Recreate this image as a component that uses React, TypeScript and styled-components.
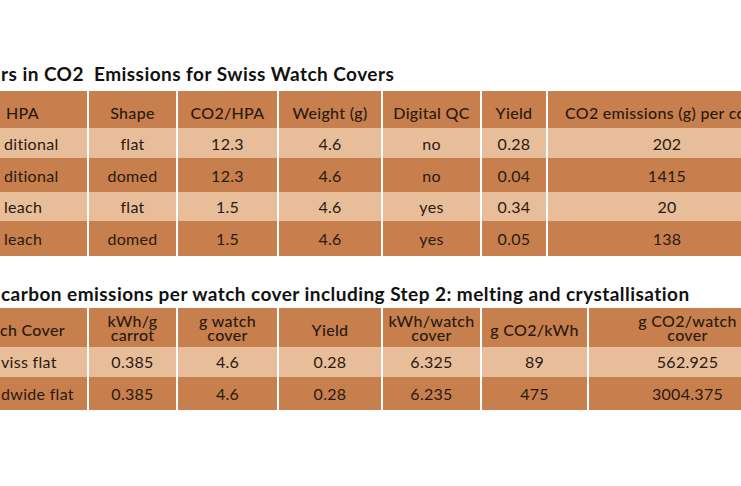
import React from 'react';
import styled, { createGlobalStyle } from 'styled-components';

const GlobalStyle = createGlobalStyle`
  html, body { margin: 0; padding: 0; background: #ffffff; }
  body {
    width: 741px;
    height: 486px;
    overflow: hidden;
    font-family: Lato, "Noto Sans", sans-serif;
    color: #2a1a10;
  }
`;

const DARK = '#c77f4e';
const LIGHT = '#e8bd9a';

const Page = styled.div`
  width: 741px;
  height: 486px;
  overflow: hidden;
  box-sizing: border-box;
  padding-top: 63px;
  display: flex;
  flex-direction: column;
  background: #ffffff;
`;

const Title = styled.h2<{ $gap: number; $top?: number }>`
  margin: ${(p) => p.$top ?? 0}px 0 ${(p) => p.$gap}px 0;
  padding-left: 1px;
  font-size: 19px;
  line-height: 22px;
  letter-spacing: 0.45px;
  font-weight: 700;
  color: #111111;
  white-space: pre;
  flex: none;
`;

const Table = styled.table`
  flex: none;
  width: 786px;
  table-layout: fixed;
  border-collapse: separate;
  border-spacing: 0;
`;

const Col = styled.col<{ $w: number }>`
  width: ${(p) => p.$w}px;
`;

const Row = styled.tr<{ $h: number; $light?: boolean }>`
  height: ${(p) => p.$h}px;
  background: ${(p) => (p.$light ? LIGHT : DARK)};
`;

const Cell = styled.td<{ $pt?: number; $left?: number }>`
  box-sizing: border-box;
  padding: ${(p) => p.$pt ?? 0}px 0 0 ${(p) => p.$left ?? 0}px;
  border-left: 2px solid #ffffff;
  text-align: center;
  vertical-align: middle;
  font-size: 16px;
  line-height: 18px;
  letter-spacing: 0.3px;
  font-weight: 400;
  white-space: nowrap;
  color: #2a1a10;

  &:first-child {
    border-left: none;
    text-align: left;
  }
`;

const Head = styled.th<{ $pt?: number; $left?: number }>`
  box-sizing: border-box;
  padding: ${(p) => p.$pt ?? 0}px 0 0 ${(p) => p.$left ?? 0}px;
  border-left: 2px solid #ffffff;
  text-align: center;
  vertical-align: middle;
  font-size: 16px;
  line-height: 14px;
  letter-spacing: 0.3px;
  font-weight: 500;
  white-space: nowrap;
  color: #2a1a10;

  &:first-child {
    border-left: none;
    text-align: left;
  }
`;

const Line = styled.span`
  display: block;
`;

const t1Cols = [87, 89, 101, 104, 99, 66, 240];
const t2Cols = [87, 89, 101, 104, 99, 107, 199];

const t1Rows = [
  { h: 30, light: true, v: ['ditional', 'flat', '12.3', '4.6', 'no', '0.28', '202'] },
  { h: 34, light: false, v: ['ditional', 'domed', '12.3', '4.6', 'no', '0.04', '1415'] },
  { h: 29, light: true, v: ['leach', 'flat', '1.5', '4.6', 'yes', '0.34', '20'] },
  { h: 35, light: false, v: ['leach', 'domed', '1.5', '4.6', 'yes', '0.05', '138'] },
];

const t2Rows = [
  { h: 30, light: true, v: ['viss flat', '0.385', '4.6', '0.28', '6.325', '89', '562.925'] },
  { h: 33, light: false, v: ['dwide flat', '0.385', '4.6', '0.28', '6.235', '475', '3004.375'] },
];

export default function App() {
  return (
    <>
      <GlobalStyle />
      <Page>
        <Title $gap={6}>{'rs in CO2  Emissions for Swiss Watch Covers'}</Title>
        <Table>
          <colgroup>
            {t1Cols.map((w, i) => (
              <Col key={i} $w={w} />
            ))}
          </colgroup>
          <thead>
            <Row $h={37}>
              <Head $pt={6} $left={6}>HPA</Head>
              <Head $pt={6}>Shape</Head>
              <Head $pt={6}>CO2/HPA</Head>
              <Head $pt={6}>Weight (g)</Head>
              <Head $pt={6}>Digital QC</Head>
              <Head $pt={6}>Yield</Head>
              <Head $pt={6}>CO2 emissions (g) per cover</Head>
            </Row>
          </thead>
          <tbody>
            {t1Rows.map((r, i) => (
              <Row key={i} $h={r.h} $light={r.light}>
                {r.v.map((c, j) => (
                  <Cell key={j} $pt={1} $left={j === 0 ? 4 : 0}>
                    {c}
                  </Cell>
                ))}
              </Row>
            ))}
          </tbody>
        </Table>

        <Title $top={27} $gap={3}>
          {'carbon emissions per watch cover including Step 2: melting and crystallisation'}
        </Title>
        <Table>
          <colgroup>
            {t2Cols.map((w, i) => (
              <Col key={i} $w={w} />
            ))}
          </colgroup>
          <thead>
            <Row $h={39}>
              <Head $pt={4} $left={0}>ch Cover</Head>
              <Head>
                <Line>kWh/g</Line>
                <Line>carrot</Line>
              </Head>
              <Head>
                <Line>g watch</Line>
                <Line>cover</Line>
              </Head>
              <Head $pt={4}>Yield</Head>
              <Head>
                <Line>kWh/watch</Line>
                <Line>cover</Line>
              </Head>
              <Head $pt={4}>g CO2/kWh</Head>
              <Head>
                <Line>g CO2/watch</Line>
                <Line>cover</Line>
              </Head>
            </Row>
          </thead>
          <tbody>
            {t2Rows.map((r, i) => (
              <Row key={i} $h={r.h} $light={r.light}>
                {r.v.map((c, j) => (
                  <Cell key={j} $left={j === 0 ? 1 : 0}>
                    {c}
                  </Cell>
                ))}
              </Row>
            ))}
          </tbody>
        </Table>
      </Page>
    </>
  );
}
